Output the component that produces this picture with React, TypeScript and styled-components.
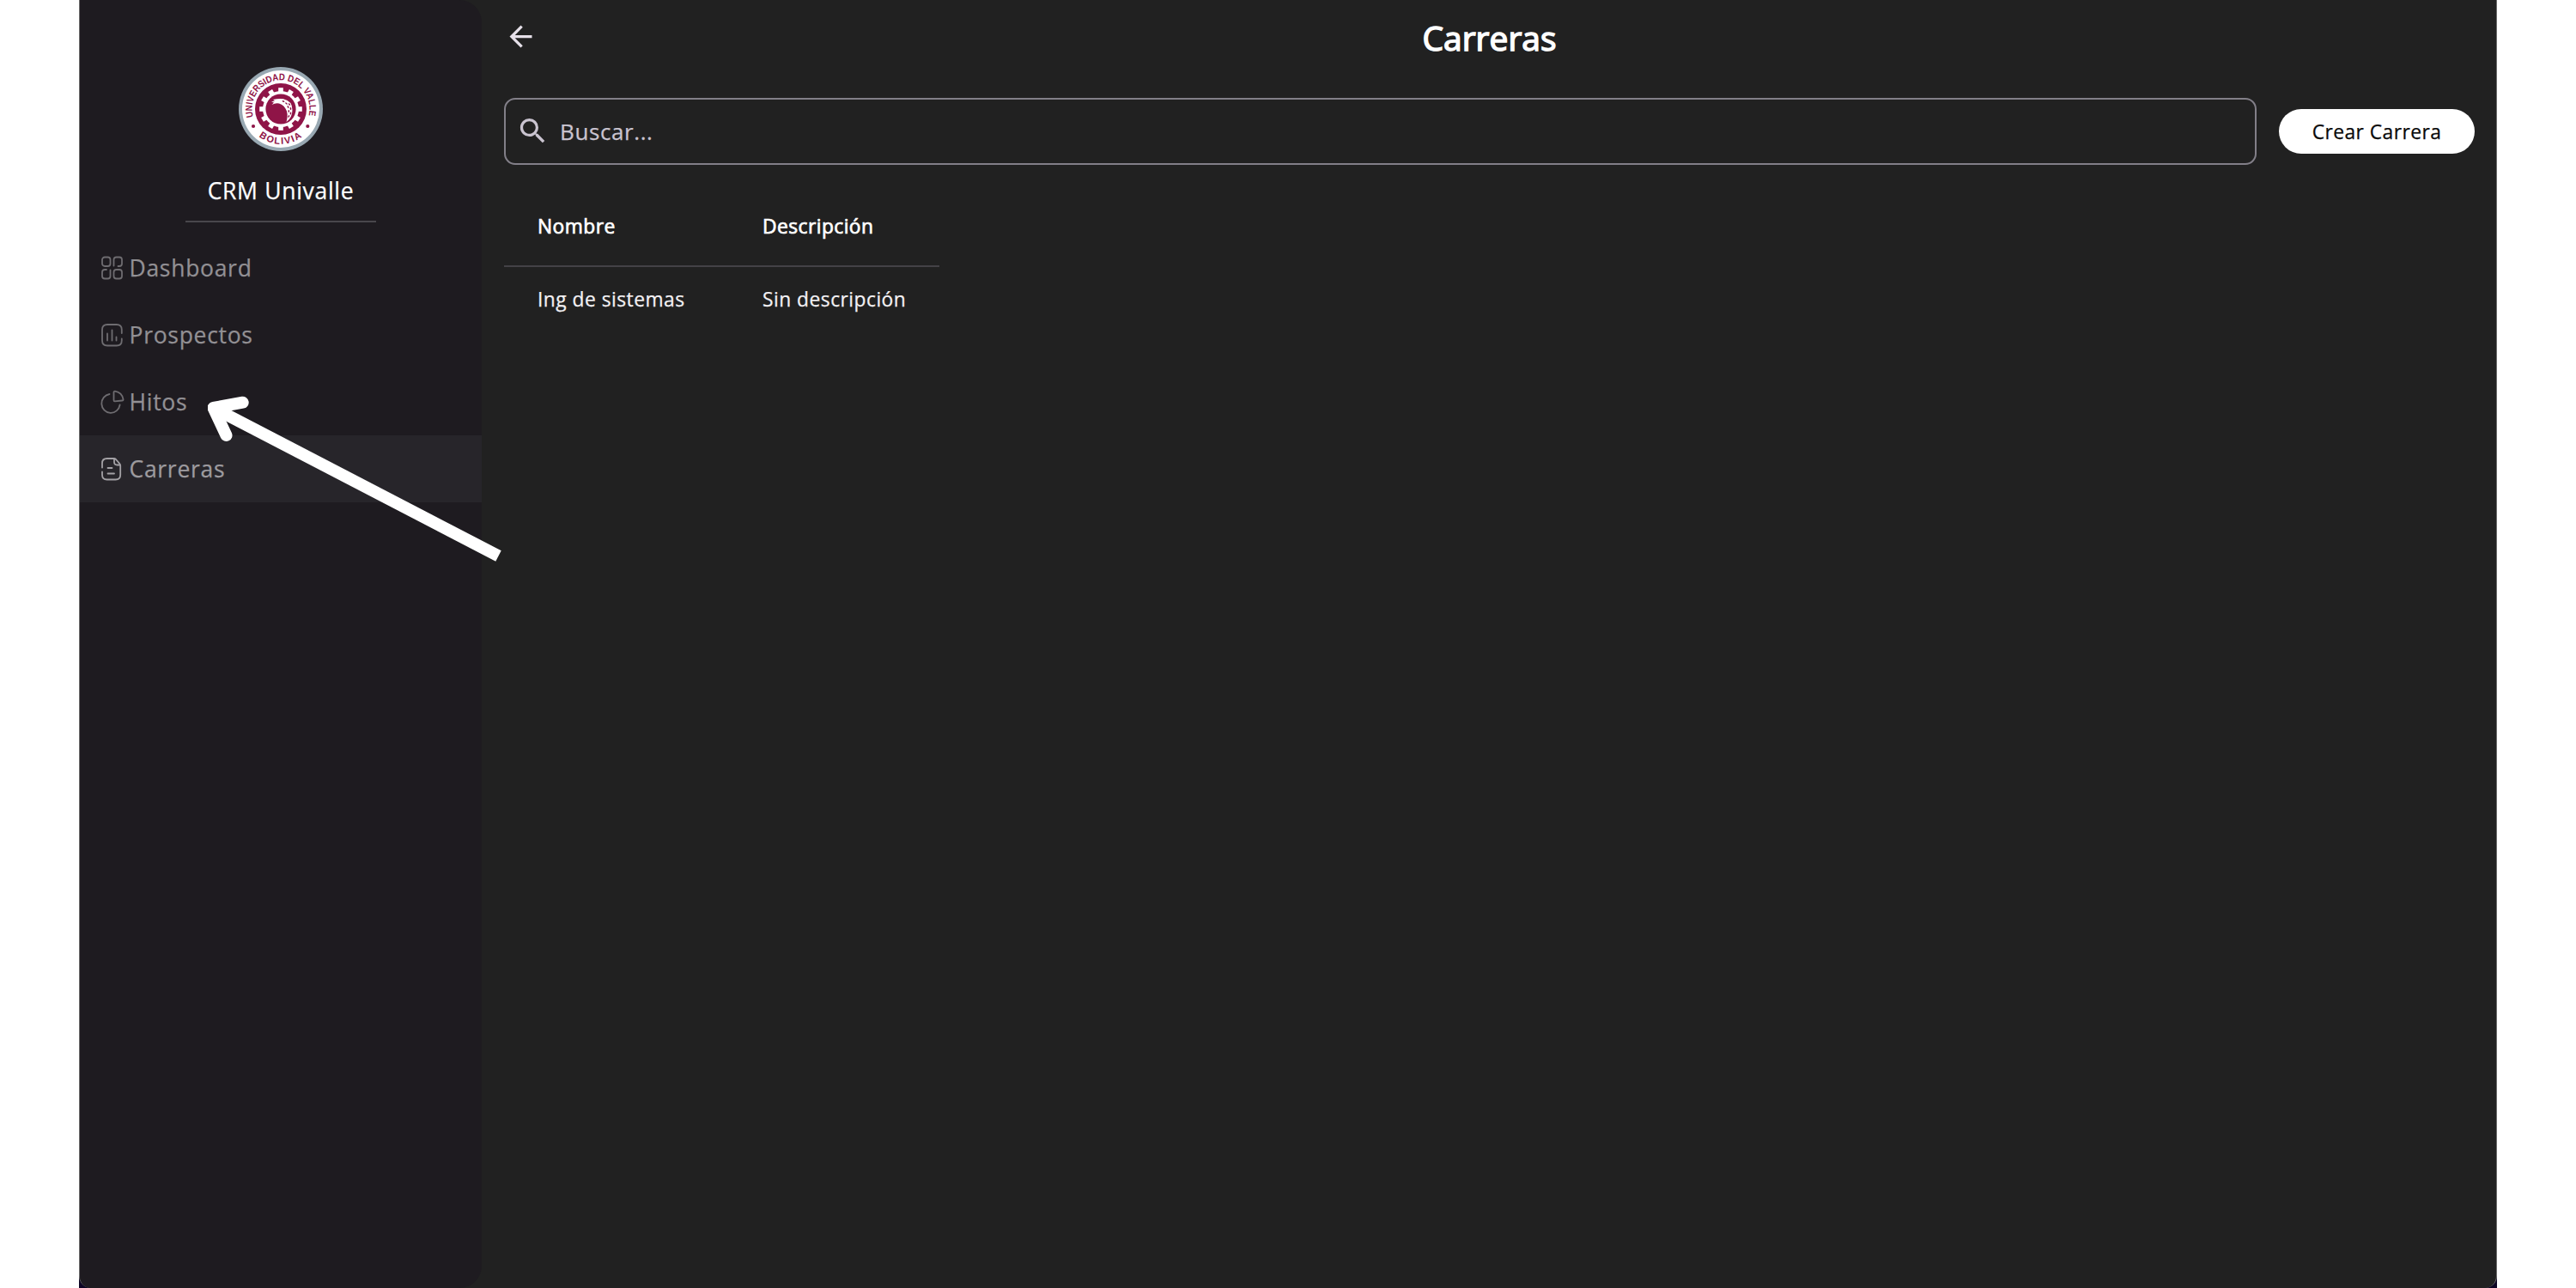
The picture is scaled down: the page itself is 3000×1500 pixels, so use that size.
import React from "react";
import styled, { createGlobalStyle, css } from "styled-components";
import { MdArrowBack, MdSearch } from "react-icons/md";

const GlobalStyle = createGlobalStyle`
  * { box-sizing: border-box; }
  body { margin: 0; background: #fff; overflow: hidden; }
`;

const Page = styled.div`
  width: 3000px;
  height: 1500px;
  display: flex;
  justify-content: center;
  background: linear-gradient(to right, #fff 92px, #0d0524 92px, #0d0524 2908px, #fff 2908px);
  font-family: "Open Sans", "Noto Sans", sans-serif;
`;

const Window = styled.div`
  position: relative;
  width: 2816px;
  height: 1500px;
  display: flex;
  background: #212121;
  border: 0 solid #6b6b6b;
  border-width: 0 1px;
  border-radius: 0 0 14px 14px;
  overflow: hidden;
`;

const Sidebar = styled.aside`
  width: 468px;
  flex: none;
  display: flex;
  flex-direction: column;
  align-items: center;
  background: #1e1b20;
  border-radius: 0 26px 26px 0;
`;

const Logo = styled.svg`
  width: 98px;
  height: 98px;
  margin-top: 78px;
  flex: none;
`;

const Label = styled.span<{ $size: number; $spacing: number }>`
  white-space: nowrap;
  font-size: ${(p) => p.$size}px;
  letter-spacing: ${(p) => p.$spacing}px;
`;

const Brand = styled.div`
  height: 40px;
  margin-top: 26px;
  line-height: 40px;
  color: #fff;
  -webkit-text-stroke: 0.25px #fff;
`;

const BrandRule = styled.hr`
  width: 222px;
  height: 2px;
  margin: 15px 0 14px;
  border: 0;
  background: #49474c;
`;

const Nav = styled.nav`
  width: 100%;
  display: flex;
  flex-direction: column;
`;

const NavItem = styled.a<{ $active?: boolean }>`
  height: 78px;
  display: flex;
  align-items: center;
  gap: 6px;
  padding: 0 0 0 23.5px;
  line-height: 40px;
  color: #929094;
  -webkit-text-stroke: 0.25px currentColor;
  ${(p) =>
    p.$active &&
    css`
      background: #27252a;
      color: #9d9b9f;
    `}
`;

const NavIcon = styled.svg<{ $bright?: boolean }>`
  width: 28px;
  height: 30px;
  flex: none;
  margin-bottom: 1px;
  fill: none;
  stroke: ${(p) => (p.$bright ? "#a3a1a5" : "#6e6c70")};
  stroke-width: 1.8;
  stroke-linecap: round;
  stroke-linejoin: round;
`;

const Main = styled.main`
  flex: 1;
  display: flex;
  flex-direction: column;
  padding: 0 25px 0 26px;
`;

const Header = styled.header`
  height: 84px;
  display: grid;
  grid-template-columns: 40px 1fr 40px;
  align-items: center;
`;

const BackIcon = styled(MdArrowBack)`
  width: 39px;
  height: 39px;
  color: #e6e0e9;
`;

const Title = styled.h1`
  margin: 0;
  justify-self: center;
  line-height: 56px;
  padding-top: 4px;
  font-size: 39px;
  font-weight: 400;
  color: #fff;
  -webkit-text-stroke: 1.5px #fff;
`;

const Toolbar = styled.div`
  display: flex;
  align-items: center;
  gap: 26px;
  margin-top: 30px;
`;

const SearchBox = styled.div`
  flex: 1;
  height: 78px;
  display: flex;
  align-items: center;
  gap: 12.5px;
  padding: 0 0 1px 11.5px;
  border: 2px solid #827f88;
  border-radius: 13px;
  color: #cac4d0;
  -webkit-text-stroke: 0.25px currentColor;
  line-height: 40px;
`;

const SearchIcon = styled(MdSearch)`
  width: 39px;
  height: 39px;
`;

const CreateButton = styled.button`
  width: 228px;
  height: 52px;
  display: flex;
  justify-content: center;
  align-items: center;
  padding: 0;
  border: 0;
  border-radius: 27px;
  background: #fff;
  color: #0a0a0a;
  -webkit-text-stroke: 0.25px currentColor;
  font-family: inherit;
`;

const Table = styled.div`
  width: 507px;
  margin-top: 25px;
  display: flex;
  flex-direction: column;
`;

const Row = styled.div<{ $head?: boolean }>`
  height: ${(p) => (p.$head ? 94 : 78)}px;
  display: grid;
  grid-template-columns: 262px 1fr;
  align-items: center;
  padding: ${(p) => (p.$head ? 1 : 0)}px 0 ${(p) => (p.$head ? 0 : 3)}px 39px;
  color: ${(p) => (p.$head ? "#fff" : "#f3f1f4")};
  -webkit-text-stroke: ${(p) => (p.$head ? 0.7 : 0.25)}px currentColor;
  ${(p) =>
    p.$head &&
    css`
      border-bottom: 2px solid #444247;
    `}
`;

const Pointer = styled.svg`
  position: absolute;
  left: 149px;
  top: 450px;
  width: 350px;
  height: 220px;
  pointer-events: none;
`;

const MAROON = "#8f1447";

const TEETH = Array.from({ length: 12 }, (_, i) => i * 30);

const GRAINS: [number, number, number][] = [
  [3, -9, 20],
  [6.5, -6.5, 40],
  [10, -5.5, 50],
  [8.5, -2.5, 70],
  [11.5, -0.5, 80],
  [9.3, 2.5, 85],
  [11.5, 5, 100],
  [9.3, 8.5, 115],
];

const UnivalleLogo = () => (
  <Logo viewBox="-49 -49 98 98">
    <defs>
      <path id="arcTop" d="M-32.2 9.2 A33.5 33.5 0 1 1 32.2 9.2" />
      <path id="arcBottom" d="M-25.6 31.8 A40.8 40.8 0 0 0 25.6 31.8" />
    </defs>
    <circle r="49" fill="#98a8b2" />
    <circle r="45" fill="#fff" />
    <circle r="30" fill={MAROON} />
    {TEETH.map((a) => (
      <rect key={a} x="-2.8" y="-24.8" width="5.6" height="6" fill="#fff" transform={`rotate(${a})`} />
    ))}
    <circle r="21" fill="#fff" />
    <circle r="17.6" fill={MAROON} />
    <path
      d="M-10.5 -5 L-8 -7.5 L-11 -8.5 L-7 -9.5 L-9 -11 Q-3 -12.5 3 -11.8 Q13.5 -9.5 13.5 1 Q13.5 10 6.5 15 Q8.5 8.5 7 2.5 Q4 -5 -2 -6.5 Q-6 -7.5 -10.5 -5 Z"
      fill="#fff"
    />
    {GRAINS.map(([x, y, r]) => (
      <ellipse key={`${x}${y}`} cx={x} cy={y} rx="1.5" ry="0.8" fill={MAROON} transform={`rotate(${r} ${x} ${y})`} />
    ))}
    <circle cx="-32" cy="20" r="2.1" fill={MAROON} />
    <circle cx="31.3" cy="20" r="2.1" fill={MAROON} />
    <g fill={MAROON} fontFamily="'Liberation Sans Narrow', 'Liberation Sans', sans-serif" fontWeight="700">
      <text fontSize="11" textLength="122" lengthAdjust="spacingAndGlyphs">
        <textPath href="#arcTop">UNIVERSIDAD DEL VALLE</textPath>
      </text>
      <text fontSize="11" textLength="54" lengthAdjust="spacing">
        <textPath href="#arcBottom">BOLIVIA</textPath>
      </text>
    </g>
  </Logo>
);

const DashboardIcon = () => (
  <NavIcon viewBox="0 0 28 30">
    <rect x="2" y="2.5" width="9.5" height="10.5" rx="3" />
    <path d="M15.5 12.5 V5.5 Q15.5 2.5 18.5 2.5 H22 Q25 2.5 25 5.5 V10 Q25 13 22 13 H20.5" />
    <path d="M7 17 H5 Q2 17 2 20 V24.5 Q2 27.5 5 27.5 H8.5 Q11.5 27.5 11.5 24.5 V17.5" />
    <rect x="15.5" y="17" width="9.5" height="10.5" rx="3" />
  </NavIcon>
);

const ChartIcon = () => (
  <NavIcon viewBox="0 0 28 30">
    <path d="M24.8 13 V9 Q24.8 3 18.8 3 H8 Q2 3 2 9 V21.5 Q2 27.5 8 27.5 H18.8 Q24.8 27.5 24.8 21.5 V19.5" />
    <path d="M8 13.5 V21.5 M13.5 9.5 V21.5 M18.5 17.5 V21.5" />
  </NavIcon>
);

const PieIcon = () => (
  <NavIcon viewBox="0 0 28 30">
    <path d="M10.5 6 A10.7 11 0 1 0 22.6 18.5" />
    <path d="M15.5 3.8 Q15.5 2.5 17 2.7 Q25 4 26.5 12 Q26.7 13.5 25.3 13.5 L16.7 14.3 Q15.5 14.3 15.5 13 Z" />
  </NavIcon>
);

const DocIcon = () => (
  <NavIcon $bright viewBox="0 0 28 30">
    <path d="M2 13.5 V8.5 Q2 3 7.5 3 H15.5 Q17 3 18 4 L22.2 8.8 Q23.2 9.8 23.2 11.3 V22 Q23.2 27.5 17.7 27.5 H7.5 Q2 27.5 2 22 V18.5" />
    <path d="M16 3.5 V7 Q16 10.5 19.5 10.5 H22.5 M8.5 14 H13.5 M8.5 20.5 H16" />
  </NavIcon>
);

const NAV = [
  { label: "Dashboard", Icon: DashboardIcon },
  { label: "Prospectos", Icon: ChartIcon },
  { label: "Hitos", Icon: PieIcon },
  { label: "Carreras", Icon: DocIcon, active: true },
];

export default function App() {
  return (
    <>
      <GlobalStyle />
      <Page>
        <Window>
          <Sidebar>
            <UnivalleLogo />
            <Brand>
              <Label $size={26.5} $spacing={0.7}>CRM Univalle</Label>
            </Brand>
            <BrandRule />
            <Nav>
              {NAV.map(({ label, Icon, active }) => (
                <NavItem key={label} $active={active}>
                  <Icon />
                  <Label $size={26.5} $spacing={0.7}>{label}</Label>
                </NavItem>
              ))}
            </Nav>
          </Sidebar>
          <Main>
            <Header>
              <BackIcon />
              <Title>Carreras</Title>
            </Header>
            <Toolbar>
              <SearchBox>
                <SearchIcon />
                <Label $size={26} $spacing={0.6}>Buscar...</Label>
              </SearchBox>
              <CreateButton>
                <Label $size={22.8} $spacing={0.45}>Crear Carrera</Label>
              </CreateButton>
            </Toolbar>
            <Table>
              <Row $head>
                <Label $size={22.8} $spacing={0.45}>Nombre</Label>
                <Label $size={22.8} $spacing={0.45}>Descripción</Label>
              </Row>
              <Row>
                <Label $size={22.8} $spacing={0.48}>Ing de sistemas</Label>
                <Label $size={22.8} $spacing={0.48}>Sin descripción</Label>
              </Row>
            </Table>
          </Main>
          <Pointer viewBox="242 450 350 220" fill="none" stroke="#fff" strokeWidth="14">
            <path d="M248.5 475 L580.5 647.5" />
            <path d="M282.7 468.7 L248.5 475 L263.5 507" strokeLinecap="round" strokeLinejoin="round" />
          </Pointer>
        </Window>
      </Page>
    </>
  );
}
